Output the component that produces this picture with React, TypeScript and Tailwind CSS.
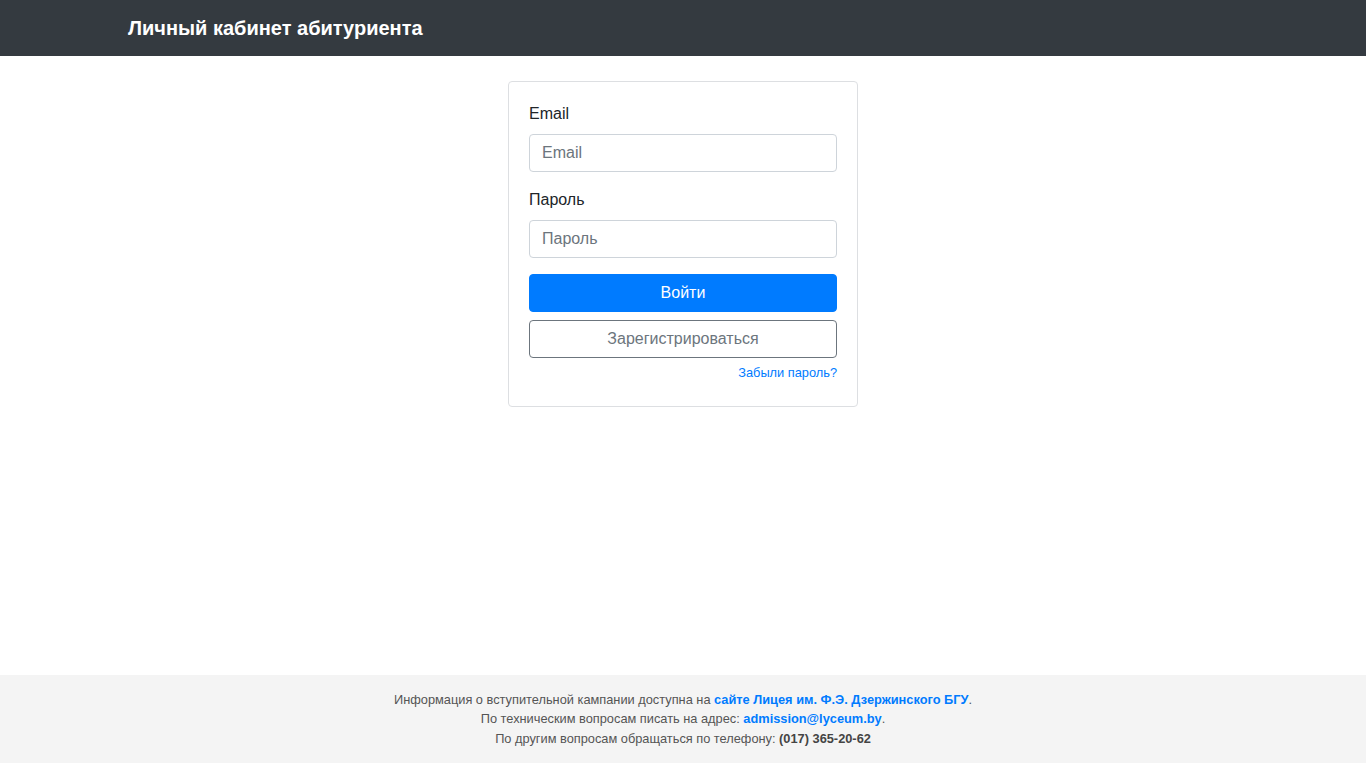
import React from 'react';

const App: React.FC = () => {
  return (
    <div className="min-h-screen flex flex-col bg-white text-[#212529] font-['Liberation_Sans',Arial,sans-serif]">
      <header className="h-[56px] bg-[#343a40] flex items-center">
        <div className="w-[1140px] mx-auto px-[15px]">
          <h1 className="text-[20px] font-bold text-white leading-[24px]">Личный кабинет абитуриента</h1>
        </div>
      </header>

      <main className="flex-1 flex justify-center pt-[25px]">
        <div className="w-[350px] h-[326px] border border-[#dddfe2] rounded-[4px] px-[20px] pt-[20px]">
          <form onSubmit={(e) => e.preventDefault()}>
            <div className="mb-[16px]">
              <label className="block text-[16px] leading-[24px] mb-[8px]">Email</label>
              <input
                type="email"
                placeholder="Email"
                className="block w-full h-[38px] px-[12px] text-[16px] border border-[#ced4da] rounded-[4px] placeholder:text-[#6c757d] outline-none"
              />
            </div>
            <div className="mb-[16px]">
              <label className="block text-[16px] leading-[24px] mb-[8px]">Пароль</label>
              <input
                type="password"
                placeholder="Пароль"
                className="block w-full h-[38px] px-[12px] text-[16px] border border-[#ced4da] rounded-[4px] placeholder:text-[#6c757d] outline-none"
              />
            </div>
            <button
              type="submit"
              className="block w-full h-[38px] bg-[#007bff] text-white text-[16px] rounded-[4px] border border-[#007bff]"
            >
              Войти
            </button>
            <button
              type="button"
              className="block w-full h-[38px] mt-[8px] bg-white text-[#6c757d] text-[16px] rounded-[4px] border border-[#6c757d]"
            >
              Зарегистрироваться
            </button>
            <div className="text-right mt-[5px] text-[12.8px] leading-[19px]">
              <a href="#" className="text-[#007bff]">Забыли пароль?</a>
            </div>
          </form>
        </div>
      </main>

      <footer className="bg-[#f4f4f4] mb-[5px] py-[15px] text-center text-[12.8px] leading-[19.5px] text-[#555]">
        <p>
          Информация о вступительной кампании доступна на{' '}
          <a href="#" className="font-bold text-[#007bff]">сайте Лицея им. Ф.Э. Дзержинского БГУ</a>.
        </p>
        <p>
          По техническим вопросам писать на адрес:{' '}
          <a href="#" className="font-bold text-[#007bff]">admission@lyceum.by</a>.
        </p>
        <p>
          По другим вопросам обращаться по телефону: <b className="text-[#444]">(017) 365-20-62</b>
        </p>
      </footer>
    </div>
  );
};

export default App;
